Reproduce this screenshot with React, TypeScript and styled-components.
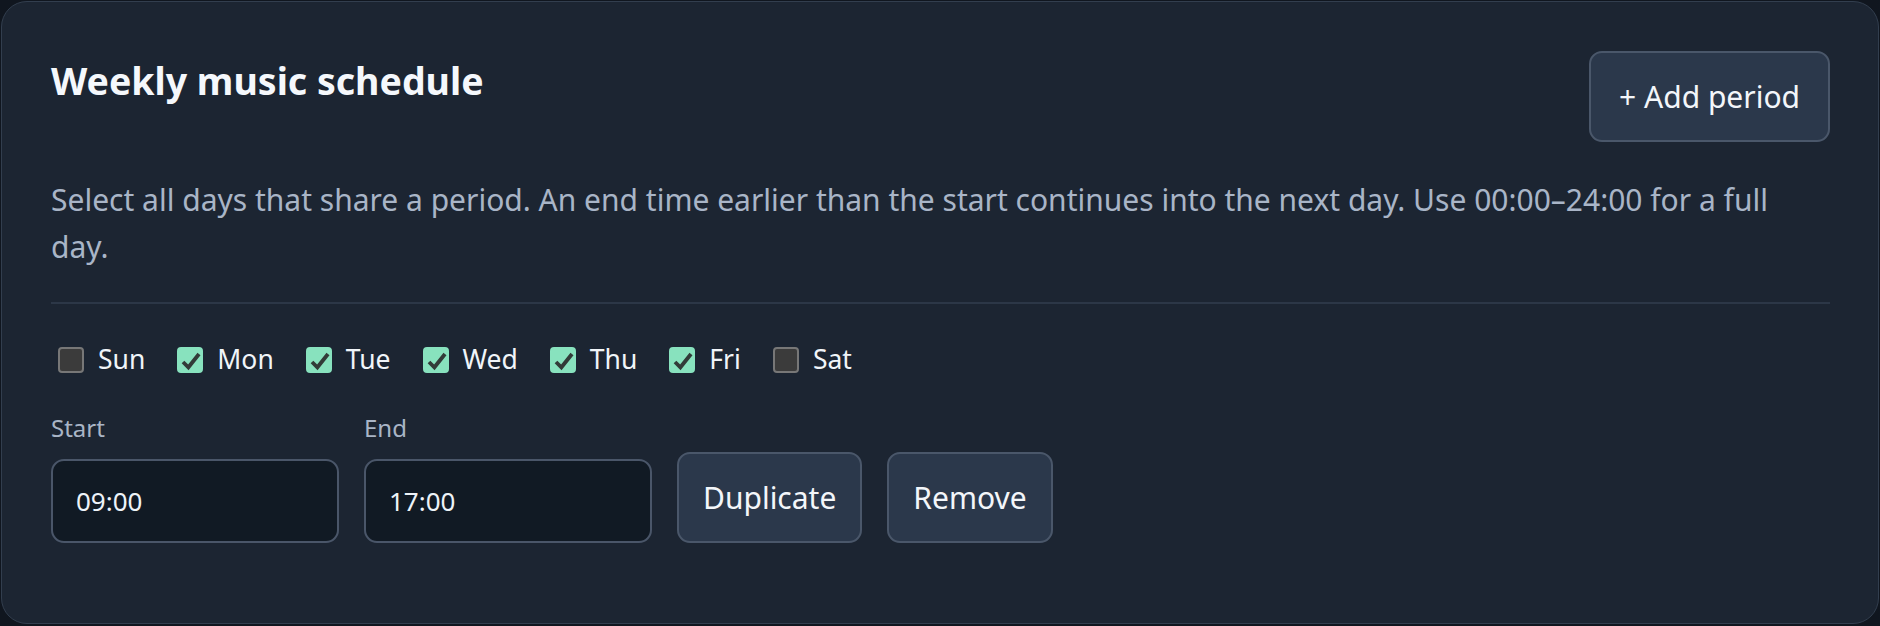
import styled, { createGlobalStyle } from "styled-components";

const GlobalStyle = createGlobalStyle`
  html, body {
    margin: 0;
    padding: 0;
    background: #10161f;
  }

  body {
    padding: 1px;
    font-family: "Noto Sans", "Open Sans", sans-serif;
  }

  * {
    box-sizing: border-box;
  }
`;

const Card = styled.section`
  height: 623px;
  padding: 49px 48px 0 49px;
  background: #1c2532;
  border: 1px solid #323e4e;
  border-radius: 26px;
`;

const Header = styled.div`
  display: flex;
  justify-content: space-between;
  align-items: flex-start;
`;

const Title = styled.h2`
  margin: 8px 0 0 0;
  color: #f5f8fc;
  font-size: 37.5px;
  font-weight: 700;
  line-height: 44px;
`;

const Button = styled.button<{ $wide?: boolean }>`
  height: 91px;
  padding: 0 ${(p) => (p.$wide ? "28px" : "24px")};
  background: #2b384b;
  border: 2px solid #4a576a;
  border-radius: 13px;
  color: #f3f6fa;
  font-family: inherit;
  font-size: 30px;
  line-height: 45px;
  cursor: pointer;
`;

const Description = styled.p`
  max-width: 1760px;
  margin: 34px 0 0 0;
  color: #a9b5c7;
  font-size: 30px;
  line-height: 47px;
`;

const Divider = styled.hr`
  margin: 32px 0 0 0;
  height: 2px;
  border: 0;
  background: #2c3747;
`;

const DayRow = styled.div`
  display: flex;
  align-items: center;
  gap: 32px;
  margin-top: 36px;
  padding-left: 7px;
`;

const Day = styled.label`
  display: flex;
  align-items: center;
  gap: 14px;
  color: #f1f5f9;
  font-size: 26.5px;
  line-height: 39px;
  cursor: pointer;
`;

const Box = styled.span<{ $checked: boolean }>`
  display: flex;
  align-items: center;
  justify-content: center;
  width: 26px;
  height: 26px;
  border-radius: 4px;
  background: ${(p) => (p.$checked ? "#88e2be" : "#3b3b3b")};
  border: 2px solid ${(p) => (p.$checked ? "#88e2be" : "#777777")};

  svg {
    width: 22px;
    height: 22px;
  }
`;

const PeriodRow = styled.div`
  display: flex;
  align-items: flex-end;
  gap: 25px;
  margin-top: 31px;
`;

const Field = styled.label`
  display: flex;
  flex-direction: column;
  gap: 13px;
  color: #a9b5c6;
  font-size: 24px;
  line-height: 36px;
`;

const TimeInput = styled.input`
  width: 288px;
  height: 84px;
  padding: 0 23px;
  background: #111a24;
  border: 2px solid #4a5669;
  border-radius: 13px;
  color: #eef3f8;
  font-family: inherit;
  font-size: 26px;
  outline: none;
`;

const days = [
  { name: "Sun", on: false },
  { name: "Mon", on: true },
  { name: "Tue", on: true },
  { name: "Wed", on: true },
  { name: "Thu", on: true },
  { name: "Fri", on: true },
  { name: "Sat", on: false },
];

const Check = () => (
  <svg viewBox="0 0 22 22" fill="none">
    <path d="M4 13 L9.4 18.3 L20 5" stroke="#323b38" strokeWidth="3.8" strokeLinejoin="miter" />
  </svg>
);

const App = () => {
  return (
    <>
      <GlobalStyle />
      <Card>
        <Header>
          <Title>Weekly music schedule</Title>
          <Button $wide>+ Add period</Button>
        </Header>

        <Description>
          Select all days that share a period. An end time earlier than the start continues into the next day. Use
          00:00–24:00 for a full day.
        </Description>

        <Divider />

        {/* 요일 선택 */}
        <DayRow>
          {days.map((d) => (
            <Day key={d.name}>
              <Box $checked={d.on}>{d.on && <Check />}</Box>
              {d.name}
            </Day>
          ))}
        </DayRow>

        <PeriodRow>
          <Field>
            Start
            <TimeInput defaultValue="09:00" />
          </Field>
          <Field>
            End
            <TimeInput defaultValue="17:00" />
          </Field>
          <Button>Duplicate</Button>
          <Button>Remove</Button>
        </PeriodRow>
      </Card>
    </>
  );
};

export default App;
